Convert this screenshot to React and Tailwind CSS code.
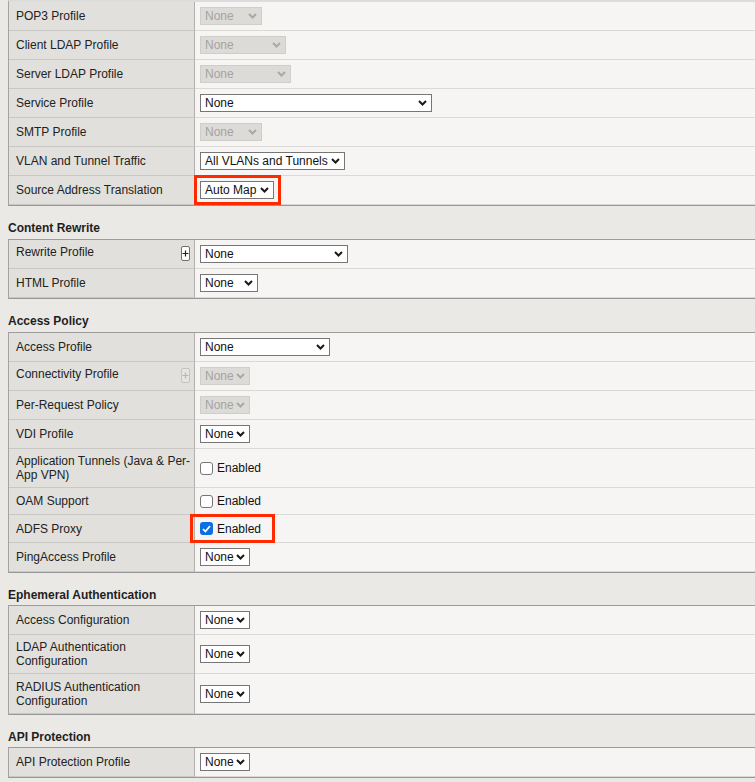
import React from "react";

const FONT = { fontFamily: '"Liberation Sans", Arial, sans-serif' };

function Chevron({ disabled }) {
  return (
    <svg width="9" height="6" viewBox="0 0 9 6" className="shrink-0">
      <path
        d="M1 1 L4.5 4.5 L8 1"
        fill="none"
        stroke={disabled ? "#a9a9a9" : "#1a1a1a"}
        strokeWidth="2"
      />
    </svg>
  );
}

function Select({ w, text, disabled }) {
  return (
    <div
      className={`flex h-[18px] items-center justify-between whitespace-nowrap border pl-[4px] pr-[4px] text-[12px] leading-[14px] ${w} ${
        disabled
          ? "border-[#d0ceca] bg-[#dddbd7] text-[#a3a3a3]"
          : "border-[#767676] bg-white text-[#111]"
      }`}
    >
      <span>{text}</span>
      <Chevron disabled={disabled} />
    </div>
  );
}

function Check({ checked }) {
  return (
    <div className="flex items-center gap-[4px] text-[12px] leading-[14px] text-[#111]">
      {checked ? (
        <div className="flex h-[13px] w-[13px] items-center justify-center rounded-[3px] bg-[#0b6fe3]">
          <svg width="9" height="8" viewBox="0 0 9 8">
            <path d="M1 4.2 L3.4 6.5 L8 1" fill="none" stroke="white" strokeWidth="1.8" />
          </svg>
        </div>
      ) : (
        <div className="h-[13px] w-[13px] rounded-[3px] border border-[#767676] bg-white" />
      )}
      <span>Enabled</span>
    </div>
  );
}

function Plus({ disabled }) {
  return (
    <div
      className={`mt-[1px] flex h-[15px] w-[9px] shrink-0 items-center justify-center rounded-[2px] border ${
        disabled ? "border-[#c4c3bf] bg-[#e6e5e2]" : "border-[#6f6f6f] bg-white"
      }`}
    >
      <svg width="7" height="7" viewBox="0 0 7 7">
        <path
          d="M3.5 0.5 V6.5 M0.5 3.5 H6.5"
          stroke={disabled ? "#b5b5b5" : "#222"}
          strokeWidth="1.2"
        />
      </svg>
    </div>
  );
}

function Row({ label, h = "h-[29px]", plus, plusDisabled, children }) {
  return (
    <div className={`flex ${h}`}>
      <div
        className={`flex w-[186px] shrink-0 justify-between border-r border-b border-r-[#b0afab] border-b-[#c9c8c4] bg-[#e1e0dc] pl-[7px] text-[12px] leading-[14px] text-[#222] ${
          plus ? "items-start pt-[5px] pr-[4px]" : "items-center pr-[1px]"
        }`}
      >
        <span>{label}</span>
        {plus && <Plus disabled={plusDisabled} />}
      </div>
      <div className="flex flex-1 items-center border-b border-b-[#dad9d6] bg-[#f6f5f3] pl-[5px]">
        {children}
      </div>
    </div>
  );
}

function Table({ children, first }) {
  return (
    <div
      className={`ml-2 border-l border-b border-l-[#a3a3a3] border-b-[#979797] ${
        first ? "border-t-2 border-t-[#dcdcdc]" : "border-t border-t-[#9c9c9c]"
      }`}
    >
      {children}
    </div>
  );
}

function Heading({ children, h = "h-[33px]" }) {
  return (
    <div className={`${h} pl-2 pt-[15px] text-[12px] font-bold leading-[14px] text-[#1e1e1e]`}>
      {children}
    </div>
  );
}

export default function App() {
  return (
    <div className="min-h-[782px] w-[755px] overflow-hidden bg-[#eae9e5]" style={FONT}>
      <Table first>
        <Row label="POP3 Profile">
          <Select w="w-[62px]" text="None" disabled />
        </Row>
        <Row label="Client LDAP Profile">
          <Select w="w-[86px]" text="None" disabled />
        </Row>
        <Row label="Server LDAP Profile">
          <Select w="w-[91px]" text="None" disabled />
        </Row>
        <Row label="Service Profile">
          <Select w="w-[232px]" text="None" />
        </Row>
        <Row label="SMTP Profile">
          <Select w="w-[62px]" text="None" disabled />
        </Row>
        <Row label="VLAN and Tunnel Traffic">
          <Select w="w-[145px]" text="All VLANs and Tunnels" />
        </Row>
        <Row label="Source Address Translation">
          <div className="relative">
            <Select w="w-[74px]" text="Auto Map" />
            <div className="absolute -left-[6px] -top-[6px] h-[30px] w-[87px] border-[3px] border-[#ff2a00]" />
          </div>
        </Row>
      </Table>

      <Heading>Content Rewrite</Heading>
      <Table>
        <Row label="Rewrite Profile" plus>
          <Select w="w-[148px]" text="None" />
        </Row>
        <Row label="HTML Profile">
          <Select w="w-[58px]" text="None" />
        </Row>
      </Table>

      <Heading>Access Policy</Heading>
      <Table>
        <Row label="Access Profile">
          <Select w="w-[130px]" text="None" />
        </Row>
        <Row label="Connectivity Profile" plus plusDisabled>
          <Select w="w-[50px]" text="None" disabled />
        </Row>
        <Row label="Per-Request Policy">
          <Select w="w-[50px]" text="None" disabled />
        </Row>
        <Row label="VDI Profile">
          <Select w="w-[50px]" text="None" />
        </Row>
        <Row label="Application Tunnels (Java & Per-App VPN)" h="h-[39px]">
          <Check />
        </Row>
        <Row label="OAM Support" h="h-[27px]">
          <Check />
        </Row>
        <Row label="ADFS Proxy" h="h-[28px]">
          <div className="relative">
            <Check checked />
            <div className="absolute -left-[10px] -top-[8px] h-[29px] w-[85px] border-[3px] border-[#ff2a00]" />
          </div>
        </Row>
        <Row label="PingAccess Profile">
          <Select w="w-[50px]" text="None" />
        </Row>
      </Table>

      <Heading h="h-[32px]">Ephemeral Authentication</Heading>
      <Table>
        <Row label="Access Configuration">
          <Select w="w-[50px]" text="None" />
        </Row>
        <Row label="LDAP Authentication Configuration" h="h-[39px]">
          <Select w="w-[50px]" text="None" />
        </Row>
        <Row label="RADIUS Authentication Configuration" h="h-[40px]">
          <Select w="w-[50px]" text="None" />
        </Row>
      </Table>

      <Heading h="h-[32px]">API Protection</Heading>
      <Table>
        <Row label="API Protection Profile">
          <Select w="w-[50px]" text="None" />
        </Row>
      </Table>
    </div>
  );
}
